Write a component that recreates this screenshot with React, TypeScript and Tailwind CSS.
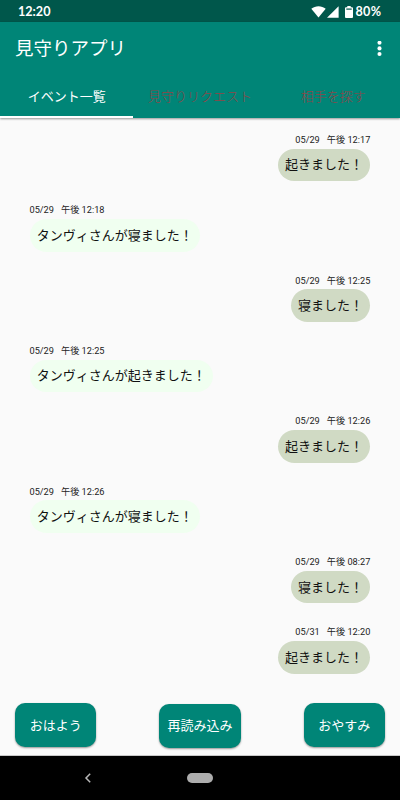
import clsx from "clsx";

type Mensagem = {
  id: number;
  date: string;
  time: string;
  text: string;
  mine: boolean;
};

const messages: Mensagem[] = [
  { id: 1, date: "05/29", time: "午後 12:17", text: "起きました！", mine: true },
  { id: 2, date: "05/29", time: "午後 12:18", text: "タンヴィさんが寝ました！", mine: false },
  { id: 3, date: "05/29", time: "午後 12:25", text: "寝ました！", mine: true },
  { id: 4, date: "05/29", time: "午後 12:25", text: "タンヴィさんが起きました！", mine: false },
  { id: 5, date: "05/29", time: "午後 12:26", text: "起きました！", mine: true },
  { id: 6, date: "05/29", time: "午後 12:26", text: "タンヴィさんが寝ました！", mine: false },
  { id: 7, date: "05/29", time: "午後 08:27", text: "寝ました！", mine: true },
  { id: 8, date: "05/31", time: "午後 12:20", text: "起きました！", mine: true },
];

const tabs = ["イベント一覧", "見守りリクエスト", "相手を探す"];
const actions = ["おはよう", "再読み込み", "おやすみ"];

function StatusBar() {
  return (
    <div className="flex h-[22px] shrink-0 items-center justify-between bg-[#00574b] pl-[18px] pr-[17.5px] pt-[2px] text-white">
      <span className="pt-px font-[Lato] text-[12.6px] font-bold leading-none">12:20</span>
      <div className="flex items-center">
        <svg width="15" height="12" viewBox="0 0 15 12" fill="currentColor" aria-hidden="true">
          <path d="M0.3 2.8C4.4-0.7 10.6-0.7 14.7 2.8L7.5 11.6Z" />
        </svg>
        <svg className="ml-px" width="12" height="12" viewBox="0 0 12 12" fill="currentColor" aria-hidden="true">
          <path d="M0 11.8L11.6 0.2V11.8Z" />
        </svg>
        <svg className="ml-[6px]" width="8" height="12" viewBox="0 0 8 12" aria-hidden="true">
          <path fill="currentColor" d="M2.3 0h3.4v1.2H7a1 1 0 0 1 1 1V11a1 1 0 0 1-1 1H1a1 1 0 0 1-1-1V2.2a1 1 0 0 1 1-1h1.3Z" />
          <path fill="#00574b" d="M1.3 2.5h5.4v1.2H1.3Z" />
        </svg>
        <span className="ml-[3px] w-[27px] whitespace-nowrap pt-px font-[Lato] text-[12.6px] font-bold leading-none tracking-[0.3px]">80%</span>
      </div>
    </div>
  );
}

function Header() {
  return (
    <header className="z-10 h-24 shrink-0 bg-[#008577] text-white shadow-[0_1px_2px_rgba(0,0,0,0.4)]">
      <div className="flex h-[52px] items-center justify-between pl-[15px] pr-[18px] pt-px">
        <h1 className="pt-px text-[18.5px] font-normal leading-none">見守りアプリ</h1>
        <button aria-label="メニュー">
          <svg width="5" height="16" viewBox="0 0 5 16" fill="currentColor">
            <circle cx="2.5" cy="1.8" r="2.05" />
            <circle cx="2.5" cy="7.4" r="2.05" />
            <circle cx="2.5" cy="13" r="2.05" />
          </svg>
        </button>
      </div>
      <nav className="grid h-11 grid-cols-3">
        {tabs.map((tab, i) => (
          <button
            key={tab}
            className={clsx(
              "border-b-2 pt-[2px] text-[13px] leading-none",
              i === 0 ? "border-white font-normal" : "border-transparent font-light text-[#8e4548]",
            )}
          >
            {tab}
          </button>
        ))}
      </nav>
    </header>
  );
}

function Message({ message }: { message: Mensagem }) {
  return (
    <li className={clsx("flex h-[70.35px] flex-col", message.mine ? "items-end" : "items-start")}>
      <div className="flex h-4 items-center gap-[7px] pb-[2px] text-[9.2px] leading-none text-[#222]">
        <span>{message.date}</span>
        <span>{message.time}</span>
      </div>
      <p
        className={clsx(
          "flex h-[32.5px] items-center rounded-full px-[7.3px] text-[13px] leading-none text-[#111]",
          message.mine ? "bg-[#d0dac4]" : "bg-[#f0fff0]",
        )}
      >
        {message.text}
      </p>
    </li>
  );
}

export default function App() {
  return (
    <div lang="ja" className="flex h-[800px] w-[400px] flex-col overflow-hidden bg-[#fafafa] font-[Roboto,'Noto_Sans_CJK_JP',sans-serif]">
      <StatusBar />
      <Header />

      <ul className="min-h-0 flex-1 overflow-hidden pl-[29.5px] pr-[29.7px] pt-[14.7px]">
        {messages.map((message) => (
          <Message key={message.id} message={message} />
        ))}
      </ul>

      <div className="flex h-[53px] shrink-0 items-start justify-between border-b border-[#c8c8c8] px-[15px]">
        {actions.map((action) => (
          <button
            key={action}
            className="h-11 w-[81.3px] rounded-[10px] bg-[#008577] text-[13px] font-normal leading-none text-white shadow-[0_1px_2px_rgba(0,0,0,0.4)] nth-2:mt-[0.5px]"
          >
            {action}
          </button>
        ))}
      </div>

      {/* Android navigation bar */}
      <div className="grid h-11 shrink-0 grid-cols-[176px_48px_176px] items-center bg-black">
        <svg className="justify-self-center" width="8" height="10" viewBox="0 0 8 10" fill="none" stroke="#b8b8b8" strokeWidth="1.5" aria-hidden="true">
          <path d="M6.2 0.8L2 5l4.2 4.2" />
        </svg>
        <span className="h-[9.5px] w-[26px] justify-self-center rounded-full bg-[#adadad]" />
      </div>
    </div>
  );
}
